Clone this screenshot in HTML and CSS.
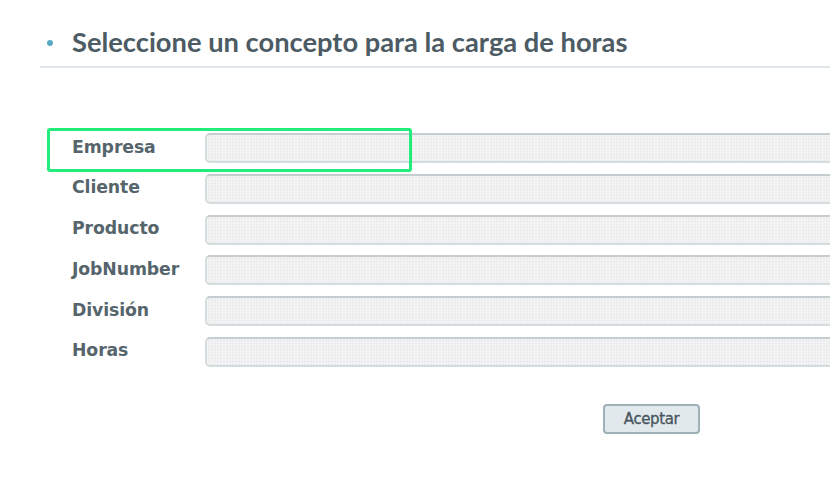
FILE: index.html
```html
<!DOCTYPE html>
<html lang="es">
<head>
<meta charset="utf-8">
<title>Carga de horas</title>
<link rel="stylesheet" href="styles.css">
</head>
<body>
<div class="page">
  <div class="header">
    <span class="bullet"></span>
    <h1 class="title">Seleccione un concepto para la carga de horas</h1>
  </div>
  <form class="form">
    <div class="row">
      <label class="label">Empresa</label>
      <div class="field"></div>
      <div class="highlight"></div>
    </div>
    <div class="row">
      <label class="label">Cliente</label>
      <div class="field"></div>
    </div>
    <div class="row">
      <label class="label">Producto</label>
      <div class="field"></div>
    </div>
    <div class="row">
      <label class="label">JobNumber</label>
      <div class="field"></div>
    </div>
    <div class="row">
      <label class="label">División</label>
      <div class="field"></div>
    </div>
    <div class="row">
      <label class="label">Horas</label>
      <div class="field"></div>
    </div>
    <div class="actions">
      <button type="button" class="btn">Aceptar</button>
    </div>
  </form>
</div>
</body>
</html>
```
FILE: styles.css
```css
html, body {
  margin: 0;
  padding: 0;
  background: #ffffff;
  overflow: hidden;
}
.page {
  width: 830px;
  height: 489px;
  overflow: hidden;
}
.header {
  margin-left: 40px;
  height: 68px;
  border-bottom: 2px solid #dfe7ea;
  display: flex;
  align-items: flex-start;
  box-sizing: border-box;
  padding-top: 25px;
}
.bullet {
  width: 6px;
  height: 6px;
  border-radius: 50%;
  background: #5aa9c4;
  margin-left: 7px;
  margin-top: 15px;
  flex: none;
}
.title {
  margin: 0 0 0 19px;
  font-family: "Lato", "Open Sans", sans-serif;
  font-weight: 700;
  font-size: 27.3px;
  line-height: 34px;
  color: #4c5b64;
  white-space: nowrap;
}
.form {
  padding-top: 65px;
  display: flex;
  flex-direction: column;
  gap: 10.8px;
}
.row {
  position: relative;
  display: flex;
  align-items: center;
  height: 30px;
}
.label {
  width: 133px;
  padding-left: 72px;
  flex: none;
  font-family: "DejaVu Sans", Verdana, sans-serif;
  font-weight: 700;
  font-size: 17.3px;
  line-height: 20px;
  margin-top: -3px;
  color: #56646c;
  letter-spacing: -0.1px;
}
.field {
  flex: none;
  width: 700px;
  height: 30px;
  box-sizing: border-box;
  border: 2px solid #d5dcdf;
  border-top-color: #c5cdd0;
  border-radius: 5px;
  background-color: #f0f0f0;
  background-image:
    repeating-linear-gradient(90deg, rgba(255,255,255,0.4) 0 1px, transparent 1px 3px),
    repeating-linear-gradient(0deg, rgba(220,220,220,0.3) 0 1px, transparent 1px 3px);
}
.highlight {
  position: absolute;
  left: 47px;
  top: -5px;
  width: 365px;
  height: 44px;
  box-sizing: border-box;
  border: 3px solid #22ec7c;
  border-radius: 3px;
}
.actions {
  display: flex;
  padding-left: 603px;
  padding-top: 26px;
}
.btn {
  width: 97px;
  height: 30px;
  box-sizing: border-box;
  border: 2px solid #9fb0b7;
  border-radius: 4px;
  background: #e2e9ec;
  font-family: "DejaVu Sans", Verdana, sans-serif;
  font-size: 15px;
  color: #46555d;
  padding: 0;
  letter-spacing: -0.4px;
  -webkit-text-stroke: 0.3px #46555d;
}
```
